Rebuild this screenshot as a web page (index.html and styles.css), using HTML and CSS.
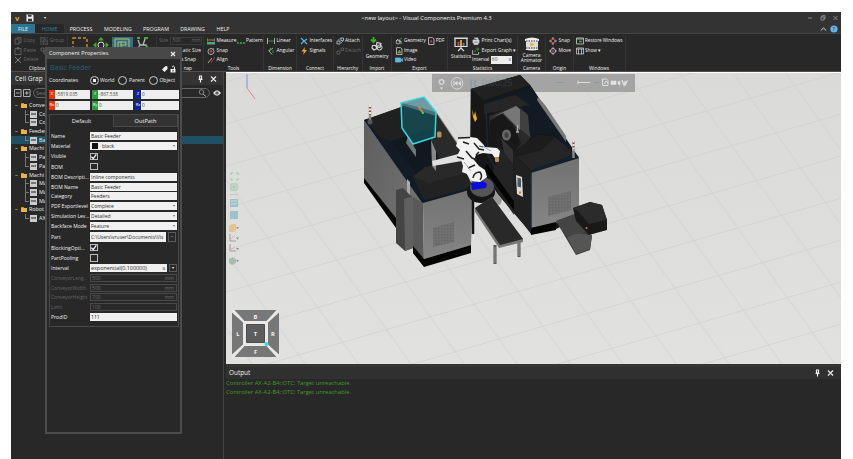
FILE: index.html
```html
<!DOCTYPE html>
<html lang="en">
<head>
<meta charset="utf-8">
<title>Visual Components Premium 4.3</title>
<link rel="stylesheet" href="styles.css">
</head>
<body>
<div class="app">
  <header class="titlebar">
    <div class="quick"><b>v</b>
      <svg width="8" height="8" viewBox="0 0 8 8"><path d="M.5.5h6l1 1v6h-7z" fill="#eee"/><path d="M2 .8h3.500v2H2zM2 4.800h4v2.400H2z" fill="#333"/></svg>
      <i>▾</i></div>
    <div class="title">&lt;new layout&gt; - Visual Components Premium 4.3</div>
    <div class="winbtns">
      <svg width="30" height="8" viewBox="0 0 30 8" fill="none" stroke="#aaa" stroke-width=".7"><path d="M0 4h4M13 3h3v3h-3zM14 3V1.700h3v3h-1M25.500 2l4 4m0-4l-4 4"/></svg>
    </div>
  </header>
  <nav class="tabs">
    <span class="file">FILE</span><span class="home">HOME</span><span class="t3">PROCESS</span><span class="t4">MODELING</span><span class="t5">PROGRAM</span><span class="t6">DRAWING</span><span class="t7">HELP</span>
    <div class="help"><svg width="20" height="8" viewBox="0 0 20 8"><path d="M.8 5.500L3.500 3l2.700 2.500" fill="none" stroke="#ddd"/><circle cx="14" cy="4" r="3.600" fill="#63b9e8"/></svg><em>?</em></div>
  </nav>
  <section class="ribbon">
    <div class="group g-clip dim">
      <div class="cols">
        <div class="col"><p><svg class="ic" viewBox="0 0 8 8"><path d="M1 2h4v5H1zM3 2V.7h4v5H5"/></svg>Copy</p><p><svg class="ic" viewBox="0 0 8 8"><path d="M1 1.500h6V7.500H1zM3 .6h2v1.500H3z"/></svg>Paste</p><p><svg class="ic x" viewBox="0 0 8 8"><path d="M1 1l6 6M7 1L1 7"/></svg>Delete</p></div>
        <div class="col"><p><svg class="ic" viewBox="0 0 8 8"><path d="M1 1h4v4H1zM3 3h4v4H3zM0 0h8v8H0z" stroke-dasharray="1.500 .7"/></svg>Group</p><p><svg class="ic" viewBox="0 0 8 8"><path d="M1 1h3v3H1zM4 4h3v3H4z"/></svg></p></div>
      </div><h6>Clipboa</h6>
    </div>
    <div class="group g-manip">
      <div class="big"><svg width="16" height="16" viewBox="0 0 16 16"><path d="M1 1h14v14H1z" fill="none" stroke="#c78a1f" stroke-width="1.500" stroke-dasharray="3 2"/></svg></div>
      <div class="big"><svg width="16" height="16" viewBox="0 0 16 16"><circle cx="8" cy="8" r="3" fill="none" stroke="#ddd"/><path d="M8 0l3 3.500H5zM0 8l3.500-3v6zM16 8l-3.500-3v6zM8 16l3-3.500H5z" fill="#3dae2b"/></svg></div>
      <div class="big on"><svg width="16" height="16" viewBox="0 0 16 16"><path d="M1 2h14v13H1zM4 5h8M4 5v8m3-8v7m0-4h5V5" fill="none" stroke="#c9bd51"/></svg></div>
      <div class="big"><svg width="16" height="16" viewBox="0 0 16 16"><path d="M3 3l2 5-2 3M5 8h6l2 4M8 8l2-6" fill="none" stroke="#bbb" stroke-width="1.300"/><path d="M2 1h3M9 1h4M1 12h4M11 9l4 4" stroke="#3dae2b" stroke-width="2"/></svg></div>
    </div>
    <div class="group g-snap"><p class="dimt">Size <u>500<s>mm</s></u></p><p class="r">atic Size</p><p class="r2">s Snap</p><h6>nap</h6></div>
    <div class="group g-tools"><div class="cols">
      <div class="col"><p><svg class="ic" viewBox="0 0 8 8"><path d="M0 1v6h8V1M0 3h8" stroke="#c6a33a"/><path d="M0 6h8" stroke="#4a9" stroke-width="2"/></svg>Measure</p><p><svg class="ic" viewBox="0 0 8 8"><circle cx="4" cy="4.500" r="3"/><path d="M4 4l3-3" stroke="#3dae2b"/><circle cx="4" cy="4.500" r="1.300" fill="#d33" stroke="none"/></svg>Snap</p><p><svg class="ic" viewBox="0 0 8 8"><path d="M1 7l4-5"/><path d="M4 7l4-6" stroke="#d33"/></svg>Align</p></div>
      <div class="col c-pat"><p><svg class="ic" viewBox="0 0 8 8"><path d="M0 6h8" stroke="#3dae2b" stroke-width="1.500" stroke-dasharray="2 1"/></svg>Pattern</p></div></div><h6>Tools</h6></div>
    <div class="group g-dim"><p><svg class="ic" viewBox="0 0 8 8"><path d="M.5 1v6M7.500 1v6"/><path d="M1 4h6" stroke="#3dae2b"/></svg>Linear</p><p><svg class="ic" viewBox="0 0 8 8"><path d="M6 1L2 4l3 3.500"/><path d="M6 3v3M1 4l3-3" stroke="#3dae2b"/></svg>Angular</p><h6>Dimension</h6></div>
    <div class="group g-con"><p><svg class="ic" viewBox="0 0 8 8"><path d="M1 1l3 3 3-2M4 4L1 7m3-3l3 3" stroke="#5fb7e5" stroke-width="1.200"/></svg>Interfaces</p><p><svg class="ic" viewBox="0 0 8 8"><path d="M5 0L1.500 4.500H4L3 8l4-5H4.500z" fill="#f0a81c" stroke="none"/></svg>Signals</p><h6>Connect</h6></div>
    <div class="group g-hier"><p><svg class="ic" viewBox="0 0 8 8"><path d="M1 4h3v3H1zM5 1h2.500v2.500H5z"/><path d="M2 3l3-2M5 6l2-2" stroke="#5fb7e5"/></svg>Attach</p><p class="dimt"><svg class="ic" viewBox="0 0 8 8"><path d="M1 4h3v3H1zM5 1h2.500v2.500H5z" stroke="#666"/></svg>Detach</p><h6>Hierarchy</h6></div>
    <div class="group g-imp"><div class="bigi"><svg width="14" height="15" viewBox="0 0 14 15"><path d="M3.500 0v3.500M1 2.500l2.500 2.500L6 2.500" fill="none" stroke="#3dae2b" stroke-width="1.800"/><path d="M7 5.500l4 1-1 4-4-1zM2.500 8.500l3 0 1.500 3-3 1.500-2-2z" fill="none" stroke="#ddd" stroke-width="1.100"/><circle cx="9.500" cy="10.500" r="2.600" fill="none" stroke="#ddd"/></svg>Geometry</div><h6>Import</h6></div>
    <div class="group g-exp"><div class="cols"><div class="col"><p><svg class="ic" viewBox="0 0 8 8"><circle cx="3" cy="5" r="2"/><path d="M3 4h3v3M1 4l2-2"/><path d="M4 3l3-2" stroke="#3dae2b"/></svg>Geometry</p><p><svg class="ic" viewBox="0 0 8 8"><path d="M1.500 .6h4L7 2v5.500H1.500z"/><path d="M2.500 6l2-3 1.500 3z" fill="#3dae2b" stroke="#c8a020" stroke-width=".5"/></svg>Image</p><p><svg class="ic" viewBox="0 0 8 8"><path d="M.5 2h5v4h-5zM5.500 4l2-1.500v3z" fill="#5fb7e5" stroke="#5fb7e5"/></svg>Video</p></div><div class="col"><p><svg class="ic" viewBox="0 0 8 8"><path d="M1.500 .6h4L7 2v5.500H1.500z"/><path d="M3 6l1-3 1 3" stroke="#d33"/></svg>PDF</p></div></div><h6>Export</h6></div>
    <div class="group g-stat"><div class="cols"><div class="bigi"><svg width="14" height="15" viewBox="0 0 14 15"><path d="M1 1.500h12v8H1zM0 1h14M7 9v3m-3 2l3-3 3 3" fill="none" stroke="#ddd" stroke-width="1.200"/><path d="M4.500 9V5" stroke="#d44" stroke-width="1.800"/><path d="M7 9V3" stroke="#f0a81c" stroke-width="1.800"/><path d="M9.500 9V6" stroke="#48c" stroke-width="1.800"/></svg>Statistics</div>
      <div class="col"><p><svg class="ic" viewBox="0 0 8 8"><path d="M1 3h6v3H1zM2 1h4v2M2 6h4v1.500H2z" fill="#ddd"/><path d="M2 5h4" stroke="#48a"/></svg>Print Chart(s)</p><p><svg class="ic" viewBox="0 0 8 8"><path d="M.6 3v4.400h6V5"/><path d="M3 5c0-2 1-3 3-3M5 .5L7 2 5 3.500" stroke="#3dae2b"/></svg>Export Graph ▾</p><p>Interval <b class="num">60<i>s</i></b></p></div></div><h6>Statistics</h6></div>
    <div class="group g-cam"><div class="bigi"><svg width="16" height="15" viewBox="0 0 16 15"><path d="M2 2h12v11H2z" fill="#ddd"/><path d="M1 2q7-3 14 0v2q-7 2-14 0zM1 12q7 3 14 0" fill="#eee"/><path d="M2 4h12M2 11h12" stroke="#333" stroke-dasharray="1.500 1"/><path d="M6.500 5.500v4l4-2z" fill="#f0a81c"/></svg>Camera<br>Animator</div><h6>Camera</h6></div>
    <div class="group g-org"><p><svg class="ic" viewBox="0 0 8 8"><circle cx="4" cy="4" r="2.500" stroke="#d44"/><path d="M4 0v3M4 5v3M0 4h3M5 4h3"/></svg>Snap</p><p><svg class="ic" viewBox="0 0 8 8"><circle cx="4" cy="4" r="2.500"/><path d="M4 0v2M4 6v2M0 4h2M6 4h2"/><circle cx="4" cy="4" r="1" stroke="#d44"/></svg>Move</p><h6>Origin</h6></div>
    <div class="group g-win"><p><svg class="ic" viewBox="0 0 8 8"><path d="M.5 1h7v6h-7zM.5 2h7"/><path d="M3 4.500h3" stroke="#3dae2b" stroke-width="1.500"/></svg>Restore Windows</p><p><svg class="ic" viewBox="0 0 8 8"><path d="M.5 1h7v6h-7zM.5 2h7M2.500 2v5M5.500 2v5"/></svg>Show ▾</p><h6>Windows</h6></div>
  </section>

  <main class="main">
    <aside class="side">
      <div class="head">Cell Grap <span class="pins"><svg width="20" height="8" viewBox="0 0 20 8"><path d="M2 1h3M2.500 1v3h2V1M1.500 4.500h4M3.500 4v3.500M14 1.500l5 5m0-5l-5 5" fill="none" stroke="#eee" stroke-width="1.200"/></svg></span></div>
      <div class="find"><svg width="17" height="8" viewBox="0 0 17 8"><path d="M.5 .5h6.500v7H.5zM2 4h3.500M9.500 .5H16v7H9.500zM11 4h3.500M12.700 2.200v3.600" fill="none" stroke="#ccc" stroke-width=".8"/></svg><span class="search">Sea<svg width="9" height="8" viewBox="0 0 9 8"><path d="M5 5l3 2.500" stroke="#aaa"/><circle cx="3.500" cy="3" r="2.300" fill="none" stroke="#aaa" stroke-width=".7"/></svg></span><svg width="8" height="6" viewBox="0 0 8 6"><path d="M0 3q4-5.500 8 0q-4 5.500-8 0z" fill="#ddd"/><circle cx="4" cy="3" r="1.600" fill="#333"/><circle cx="4" cy="3" r=".6" fill="#fff"/></svg></div>
      <ul class="tree">
        <li class="f">Conve</li><li class="c">Co</li><li class="c e">Co</li>
        <li class="f">Feeder</li><li class="c e sel">Ba</li>
        <li class="f">Machi</li><li class="c">Pa</li><li class="c e">Pa</li>
        <li class="f">Machi</li><li class="c">Ma</li><li class="c">Ma</li><li class="c e">Ma</li>
        <li class="f">Robot</li><li class="c e">AX</li>
      </ul>
    </aside>
    <div class="right">
      <div class="view">
        <svg class="scene" viewBox="226 73 615 291" width="615" height="291">
          <defs>
            <pattern id="grid" width="10" height="10" patternUnits="userSpaceOnUse" patternTransform="matrix(4.390 -1.270 2.490 3.480 647.600 65)"><path d="M5 0v10M0 5h10" stroke="#cfd0d5" stroke-width=".17"/></pattern>
            <pattern id="mesh" width="1.500" height="1.500" patternUnits="userSpaceOnUse"><path d="M0 0h1.500M0 0v1.500" stroke="#626262" stroke-width=".8"/></pattern>
            <linearGradient id="bg" x2="0" y2="1"><stop stop-color="#dadad9"/><stop offset="1" stop-color="#e1e1e0"/></linearGradient>
            <linearGradient id="lf" x2="1" y2="1"><stop stop-color="#5e5e5e"/><stop offset="1" stop-color="#777"/></linearGradient>
            <linearGradient id="ff" x2="0" y2="1"><stop stop-color="#727272"/><stop offset="1" stop-color="#858585"/></linearGradient>
          </defs>
          <path d="M226 73h615v291H226z" fill="url(#bg)"/><path d="M226 73h615v291H226z" fill="url(#grid)"/>
          <path d="M247 74v14" stroke="#8888ec"/><path d="M247 88l8 11" stroke="#e36d6d" stroke-width=".8"/>
          <rect x="432" y="74" width="203" height="18" fill="#8f8f8f" opacity=".72"/>
          <!-- right machine -->
          <path d="M470.700 89L520 75l10 10 49 73v60l-23 11-24 5-62-72z" fill="#171717"/>
          <path d="M471 89l49-14 10 10-46 15z" fill="#222"/>
          <path d="M483 102l32-9 15-8 48 72-7 2-14-23-20-2-16 8-3-35-10-7z" fill="#121a24"/>
          <path d="M538 97l7 8 21 31v6l-29-42z" fill="#777"/>
          <path d="M484 104l31-9 15 10-46 9z" fill="#262626"/>
          <path d="M489 116l27-11 6 5 9 27-10 12-11 12-20-22z" fill="#2a2a2a"/>
          <path d="M490 118l26-12 5 4-1 20-17-17-13 5z" fill="#777"/>
          <path d="M520 108l8 7 2 22-10-8z" fill="#404040"/>
          <path d="M490 121l12-7 11 11 8 18-10 13-21-15z" fill="#181818"/>
          <ellipse cx="506.500" cy="135" rx="4.500" ry="5.500" fill="#676767"/><ellipse cx="506.500" cy="135" rx="2" ry="3" fill="#3f3f3f"/>
          <path d="M517.500 125v7M516 132h3" stroke="#aaa" stroke-width="1.500"/>
          <path d="M486 107l2 48 31 55" fill="none" stroke="#17293c" stroke-width="1.500"/>
          <path d="M472 109l2 7 1-5 2 8-2 3-2-5z" fill="#f0b018"/>
          <path d="M500 150l13 4 1 61-24-35z" fill="#242424"/>
          <path d="M501 138l12 12v14l-9-12z" fill="#323232"/>
          <path d="M487 164l-3 5 47 65 1-8z" fill="#050505"/>
          <path d="M513 152l18 20v61l-17-20z" fill="#202020"/>
          <path d="M513 152l25-17 17 2 20 17-43 18z" fill="#252525"/><path d="M513 152l25-17 17 2-13 13-27 7z" fill="#1c1c1c"/>
          <path d="M531 170l44-16 4 3-48 16z" fill="#14202d"/>
          <path d="M531 173l48-15v60l-48 10z" fill="url(#ff)"/><path d="M531 173v55" stroke="#18283a" stroke-width="1.500"/>
          <path d="M531 228l25-6v8l-25 5z" fill="#050505"/>
          <path d="M548 197l23-6v19l-23 6z" fill="#777"/><path d="M548 197l23-6v19l-23 6z" fill="url(#mesh)"/>
          <path d="M516 175l6 2 1 20-6-3z" fill="#ddd"/><path d="M517.500 177.500l3.500 1v9l-3.500-1z" fill="#4b5764"/><circle cx="520" cy="192.500" r="1.200" fill="#e67b25"/>
          <path d="M556 221l19-7 13 18 4 4-2 14-14 5z" fill="#3a3a3a"/><path d="M567 237l10-4 15 2-2 14-14 5z" fill="#555"/><path d="M556 221l19-7 13 18-22 4z" fill="#444"/>
          <path d="M573 208l17-6 12 3 5 15v10l-18 5-13-14z" fill="#191919"/><path d="M573 208l17-6 12 3 5 15-18 4-11-13z" fill="#2b2b2b"/><circle cx="586.500" cy="228" r="1" fill="#f07820"/>
          <path d="M573.500 141v17" stroke="#888" stroke-width="2.500"/><path d="M573.500 141v10" stroke="#eee" stroke-width="2"/><path d="M573.500 142.500v8" stroke="#a33" stroke-width="2" stroke-dasharray="1.500 2"/>
          <!-- left machine -->
          <path d="M364 120l40-14 32 10 37 73-50 14z" fill="#1b1d20"/>
          <path d="M364 120l59 83v56l-28-37-31-42z" fill="url(#lf)"/>
          <path d="M364 178l32 40v10l-32-45z" fill="#050505"/>
          <path d="M364 120l13-4 47 63 49 7v4l-50 14z" fill="#121c27"/>
          <path d="M366 120l38-14 26 10 2 14-35 12-15-3z" fill="#202020"/>
          <path d="M391 141l39-13 14 34-26 14z" fill="#101820"/>
          <path d="M413 177l12-10 36-6 12 26-49 13z" fill="#222"/><path d="M413 177l12-10 36-6 5 12-37 10z" fill="#292929"/>
          <path d="M408 136l8 14v7l-10-14z" fill="#6f7475"/>
          <path d="M413 197l10 6 1 63-11-13z" fill="#595959"/>
          <path d="M423 203l50-14-2 56-47 14z" fill="url(#ff)"/>
          <path d="M413 246l11 13 47-14v8l-47 14-11-14z" fill="#050505"/>
          <path d="M407 179l3 3v14l-3-3z" fill="#aaa"/>
          <path d="M396 190l7-2 10 10v50l-8 3-9-8z" fill="#444"/><path d="M404 199l9-3v52l-8 3z" fill="#606060"/>
          <path d="M433 228l21-6v20l-21 5z" fill="#777"/><path d="M433 228l21-6v20l-21 5z" fill="url(#mesh)"/>
          <path d="M370 105v18" stroke="#888" stroke-width="2.500"/><path d="M370 105v11" stroke="#eee" stroke-width="2"/><path d="M370 107v9" stroke="#a33" stroke-width="2" stroke-dasharray="1.500 2"/><circle cx="370" cy="122" r="2.500" fill="#555"/>
          <!-- feed conveyor -->
          <path d="M431 139l5-1v33l-4-5z" fill="#888"/><path d="M436 112l27 40-22 11-10-23z" fill="#2a2a2a"/><path d="M436 112l27 40" stroke="#888"/>
          <path d="M432 161l30-8v8l-29 5z" fill="#e0e0e0"/>
          <rect x="437" y="131.500" width="4.500" height="6" rx="1.500" fill="#b98c57"/>
          <path d="M401 103l23-6 12 15-1 25-22 7-11-16z" fill="#16505b" fill-opacity=".75" stroke="#35d8dd" stroke-width="1.500"/><path d="M402 103l22-5 11 14-17-5z" fill="#8bb7bd" opacity=".6"/><path d="M418 106l5 7" stroke="#b88a3c" stroke-width="2"/><circle cx="423" cy="113" r="1" fill="#3e3"/>
          <!-- outlet conveyor -->
          <path d="M473 165v69" stroke="#151515" stroke-width="2.500"/>
          <path d="M491 184l11 16-2 5-11-4z" fill="#999"/><ellipse cx="481" cy="192" rx="14" ry="11" fill="#151515"/><ellipse cx="482" cy="187" rx="12" ry="10" fill="#555"/>
          <path d="M495 245v19M519 240v17" stroke="#555" stroke-width="3"/><path d="M495 247v16M519 241v15" stroke="#999"/>
          <path d="M475 208l17-11 31 42v3l-24 6-24-36z" fill="#777"/><path d="M475 208l17-11 31 42-23 6z" fill="#292929"/>
          <!-- robot -->
          <path d="M471 183l12-2 4 3-1 4-14 2z" fill="#0c0cda"/>
          <path d="M458 140l12-3 7 1 6 6 2 3 12 1 3 3-1 6-4 1-3-4-9-1-7 2-2 5 5 6 6 4 2 7-7 5-8-1-5-7-5-2 1-6-2-8-4-2 3-6-4-4z" fill="#f2f2f2"/>
          <path d="M458 138l12-.500M463 142l6 2M466 151l6 7 5 2M457 157l7 2M468 168l7-3M473 178q1-6 7-6 3 4 0 8M474 143l5 6 5 1M476 155l3-3" fill="none" stroke="#222" stroke-width="1.500"/>
          <path d="M464 162l7 9M482 146l9 5" fill="none" stroke="#aaa"/><path d="M479 146l4 1" stroke="#3a4f7c" stroke-width="1.200"/><rect x="495" y="157" width="4" height="5" rx="1" fill="#bb8b55"/>
          <!-- playback bar -->
          <g fill="none" stroke="#e3e3e3"><circle cx="441.500" cy="82" r="2.300" stroke-width="1.600" stroke-dasharray="1.400 .5"/><circle cx="457" cy="83.300" r="5.800" stroke-width=".8"/><path d="M454 80.800v5"/><path d="M578 82.500h12M578 80.500v4M602.500 79h4l1.500 1.500v5h-5.500zM604 84l2-3 2 2" stroke-width=".9"/><path d="M611 81h5v3.500h-5zM618 82l2-1v4l-2-1z" fill="#e3e3e3" stroke-width=".6"/><path d="M622 80l2 5 1.500-4M625 85.500l2.500-5" stroke-width="1.200"/></g>
          <path d="M440 87.500h3l-1.500 2zM457.500 80.800v5l-3-2.500zM461 80.800v5l-3-2.500z" fill="#e3e3e3"/><path d="M471 79.500v8M475 79.500v8" stroke="#829ca9" stroke-width="1.500"/><path d="M556 82.500h8M594 82.500h5" stroke="#7f98a4" stroke-width=".8"/>
          <text x="482" y="86" class="clock">0:00:25</text><text x="533" y="85" class="speed">3.5</text>
          <path d="M470.700 89L513 77l7-2 6 6-40 17z" fill="#222" opacity=".8"/>
          <!-- view tools -->
          <g opacity=".6"><g fill="none" stroke="#76b879"><path d="M231 175v-2h2M236 173h2v2M231 178v2h2M236 180h2v-2M231 184h6v6h-6zM233 186h2v2h-2z"/></g><path d="M230 194.500h8" stroke="#bbb"/><path d="M230 199h8v8h-8zM230 211h8v8h-8z" fill="#78aebb"/><path d="M231 201h6M231 204h6" stroke="#c9dddd"/><path d="M229 226l3-2h4v6l-2 2h-5z" fill="#e7b45f"/><path d="M230 234v7h6M230 244v7h6" fill="none" stroke="#777"/><path d="M230 240l5-5M230 250l5-3" stroke="#d99"/><path d="M229 259l4-2 3 2v4l-4 2-3-2z" fill="#85aa90"/><path d="M236 227h3l-1.500 2zM236 237.500h3l-1.500 2zM236 248h3l-1.500 2zM236 260h3l-1.500 2z" fill="#555"/></g>
          <!-- view cube -->
          <path d="M232 310h47v47h-47z" fill="#e9e9e9"/><path d="M234.500 310h42l-10 11h-22zM234.500 357h42l-10-11h-22zM232 312.500v42l11-10v-22zM279 312.500v42l-11-10v-22z" fill="#777"/><path d="M246.500 324.500h18v18h-18z" fill="#5d5d5d" stroke="#4d4d4d"/><circle cx="266.500" cy="344" r="2" fill="#35dce3"/>
          <g class="cube"><text x="255.500" y="318.500">B</text><text x="255.500" y="335.500">T</text><text x="255.500" y="353.500">F</text><text x="238" y="335.500">L</text><text x="273" y="335.500">R</text></g>
        </svg>
      </div>
      <div class="output">
        <div class="ohead">Output <svg width="20" height="8" viewBox="0 0 20 8"><path d="M2 1h3M2.500 1v3h2V1M1.500 4.500h4M3.500 4v3.500M14 1.500l5 5m0-5l-5 5" fill="none" stroke="#eee" stroke-width="1.200"/></svg></div>
        <p>Controller AX-A2-B4::OTC: Target unreachable.</p><p>Controller AX-A2-B4::OTC: Target unreachable.</p>
      </div>
    </div>
  </main>
</div>

<section class="dialog">
  <div class="dhead">Component Properties <svg width="6" height="6" viewBox="0 0 6 6"><path d="M1 1l4 4m0-4L1 5" stroke="#eee" stroke-width="1.200"/></svg></div>
  <div class="dname">Basic Feeder <svg width="15" height="8" viewBox="0 0 15 8"><path d="M0 4.500L3.500 1l2 .5V4L2.500 7z" fill="#eee"/><path d="M8.500 4h5v3.500h-5z" fill="#eee"/><path d="M12.500 4V2q-1-1.800-2.500 0" fill="none" stroke="#eee"/><path d="M11 5v1.500" stroke="#333"/></svg></div>
  <div class="radios"><span>Coordinates</span><label class="chk">World</label><label>Parent</label><label>Object</label></div>
  <div class="coords">
    <div><b class="cx">X</b>-5819.035</div><div><b class="cy">Y</b>-867.538</div><div><b class="cz">Z</b>0</div>
    <div><b class="cx">Rx</b>0</div><div><b class="cy">Ry</b>0</div><div><b class="cz">Rz</b>0</div>
  </div>
  <div class="props">
    <div class="ptabs"><span>Default</span><span>OutPath</span></div>
    <div class="rows">
      <label>Name</label><div class="in">Basic Feeder</div>
      <label>Material</label><div class="in dd"><i class="sw"></i>black</div>
      <label>Visible</label><div class="cb"><svg viewBox="0 0 8 8"><path d="M1.500 4l2 2 3.200-4.500" fill="none" stroke="#fff" stroke-width="1.300"/></svg></div>
      <label>BOM</label><div class="cb"></div>
      <label>BOM Descripti...</label><div class="in">Inline components</div>
      <label>BOM Name</label><div class="in">Basic Feeder</div>
      <label>Category</label><div class="in">Feeders</div>
      <label>PDF Exportlevel</label><div class="in dd">Complete</div>
      <label>Simulation Lev...</label><div class="in dd">Detailed</div>
      <label>Backface Mode</label><div class="in dd">Feature</div>
      <label>Part</label><div class="pair"><div class="in path">C:\Users\vruser\Documents\Vis</div><b class="dots">...</b></div>
      <label>BlockingOpti...</label><div class="cb"><svg viewBox="0 0 8 8"><path d="M1.500 4l2 2 3.200-4.500" fill="none" stroke="#fff" stroke-width="1.300"/></svg></div>
      <label>PartPooling</label><div class="cb"></div>
      <label>Interval</label><div class="pair"><div class="in iv">exponential(0.100000)<s>s</s></div><b>▾</b></div>
      <label class="off">ConveyorLeng...</label><div class="in offin">500<s>mm</s></div>
      <label class="off">ConveyorWidth</label><div class="in offin">500<s>mm</s></div>
      <label class="off">ConveyorHeight</label><div class="in offin">700<s>mm</s></div>
      <label class="off">Limit</label><div class="in offin">100</div>
      <label>ProdID</label><div class="in">111</div>
    </div>
  </div>
</section>
</body>
</html>
```
FILE: styles.css
```css
* { box-sizing: border-box; }
body { margin: 0; width: 853px; height: 459px; overflow: hidden; background: #fff; font-family: "Open Sans", "Noto Sans", sans-serif; font-size: 5.2px; line-height: 1.2; color: #f2f2f2; padding: 12px 12px 0 11px; }
p, h6, ul { margin: 0; padding: 0; }
s, u { text-decoration: none; }
i, em { font-style: normal; }
svg { flex: none; display: block; }
.app { width: 830px; height: 447px; background: #282828; display: flex; flex-direction: column; white-space: nowrap; }

.titlebar { height: 12px; flex: none; background: #333; display: flex; align-items: center; justify-content: space-between; padding: 0 3px 0 4px; }
.quick { display: flex; gap: 7px; align-items: center; width: 60px; }
.quick b { color: #e9a51b; font-size: 7.500px; line-height: 8px; }
.quick i { font-size: 4px; margin-left: 3px; }
.title { font-size: 5.850px; }
.winbtns { width: 60px; display: flex; justify-content: flex-end; }
.tabs { height: 10px; flex: none; background: #333; border-bottom: 1px solid #444; display: flex; font-size: 5.300px; line-height: 10px; text-align: center; }
.file { width: 24px; background: #2b7492; }
.home { width: 29px; background: #272727; color: #2f86a8; }
.t3 { width: 34px; } .t4 { width: 40px; } .t5 { width: 36px; } .t6 { width: 37px; } .t7 { width: 24px; }
.help { margin-left: auto; width: 21px; position: relative; padding-top: 1px; }
.help em { position: absolute; left: 12.500px; top: 0; color: #2869a0; font-weight: bold; }

.ribbon { height: 38px; flex: none; background: #282828; display: flex; padding-top: 1.500px; border-bottom: 1px solid #544d4d; font-size: 4.900px; }
.group { border-right: 1px solid #353535; height: 35.500px; padding: 1px 0 0 3px; display: flex; flex-direction: column; flex: none; }
.group p { height: 9.500px; display: flex; align-items: center; gap: 1.500px; }
.group h6 { margin-top: auto; font-size: 4.700px; font-weight: 400; text-align: center; line-height: 6px; margin-left: -3px; }
.ic { width: 8px; height: 8px; fill: none; stroke: #ccc; stroke-width: .8; }
.cols { display: flex; gap: 2px; }
.dimt, .dim p { color: #6a6a6a; } .dim .ic { stroke: #6a6a6a; } .dim .ic.x { stroke: #999; }
.g-clip { width: 57px; } .g-clip h6 { margin-left: 0; padding-left: 15px; text-align: left; }
.g-manip { width: 89px; flex-direction: row; padding-left: 2px; }
.big { width: 20.500px; height: 18px; display: flex; justify-content: center; padding-top: 0; }
.big + .big { margin-left: .5px; } .big.on { background: #2d718d; }
.g-snap { width: 47px; padding-left: 2px; }
.g-snap u { border: 1px solid #3b3b3b; width: 32px; padding: 0 1px; display: flex; justify-content: space-between; margin-left: 1px; }
.g-snap .r, .g-snap .r2 { justify-content: flex-end; padding-right: 2px; } .g-snap .r2 { padding-right: 7px; }
.group.g-snap h6 { text-align: right; padding-right: 11px; }
.g-tools { width: 60px; } .g-tools .cols { gap: 1px; } .c-pat p { gap: .5px; }
.g-dim { width: 33px; } .g-con { width: 37px; } .g-hier { width: 29px; padding-left: 2px; }
.g-hier p { gap: 1px; }
.g-imp { width: 29px; } .g-exp { width: 56px; font-size: 4.700px; padding-left: 3px; } .g-exp .cols { gap: 1px; } .g-exp p { gap: 1px; }
.g-stat { width: 70px; } .g-cam { width: 28px; } .g-org { width: 28px; } .g-win { width: 52px; padding-left: 2px; font-size: 4.650px; } .g-win p { gap: 1px; }
.bigi { display: flex; flex-direction: column; align-items: center; line-height: 5px; gap: 2px; text-align: center; margin-left: -1px; }
.g-cam .bigi, .g-imp .bigi { margin-left: -3px; } .g-cam .bigi { gap: 1px; }
.g-stat .cols { gap: 1px; } .g-stat .bigi { margin-left: 0; }
.num { background: #eee; color: #555; width: 21px; height: 8px; font-weight: 400; padding: 1px; display: flex; justify-content: space-between; margin-left: 0; }

.main { flex: 1; display: flex; min-height: 0; }
.side { width: 213px; border-right: 1px solid #444; flex: none; }
.head { height: 13px; background: #333; font-size: 6.500px; line-height: 13px; padding: 0 6px 0 4px; display: flex; justify-content: space-between; align-items: center; }
.find { height: 16px; padding: 0 2px 0 3px; display: flex; gap: 2px; align-items: center; }
.search { flex: 1; height: 10px; border: 1px solid #666; border-radius: 5px; display: flex; justify-content: space-between; align-items: center; padding: 0 2px; color: #777; font-size: 5.300px; margin-right: 1px; }
.tree { list-style: none; font-size: 5.400px; }
.tree li { height: 8.700px; line-height: 8.700px; display: flex; align-items: center; }
.tree .f::before { content: "–"; width: 6px; margin: 0 8px 0 4px; }
.tree .f { background: linear-gradient(#e8b44a, #e8b44a) 10px 3px / 6px 4px no-repeat, linear-gradient(#c78a28, #c78a28) 10px 2px / 3px 2px no-repeat; }
.tree .c { padding-left: 28px; background: linear-gradient(#777, #777) 14px 0 / 1px 100% no-repeat, linear-gradient(#777, #777) 14px 4px / 4px 1px no-repeat, linear-gradient(#777, #777) 20px 3px / 5px 2px no-repeat, linear-gradient(#ccc, #ccc) 19px 1px / 7px 7px no-repeat; }
.tree .e { background-size: 1px 50%, 4px 1px, 5px 2px, 7px 7px; }
.tree .sel { background-color: #205064; }

.right { flex: 1; display: flex; flex-direction: column; padding-left: 2px; min-width: 0; }
.view { height: 292px; flex: none; border-top: 1px solid #fff; }
.clock { font-size: 9px; fill: #829ca9; }
.speed { font-size: 5px; fill: #8fa9b8; }
.cube text { font-size: 5.800px; font-weight: bold; fill: #f4f4f4; text-anchor: middle; }
.output { flex: 1; border-top: 3px solid #353535; }
.ohead { height: 12px; background: #303030; display: flex; align-items: center; justify-content: space-between; padding: 0 7px 0 3px; font-size: 6.400px; }
.output p { color: #459a2b; font-size: 5.800px; height: 8.500px; line-height: 8.500px; padding-left: 0; }

.dialog { position: absolute; left: 45px; top: 47px; width: 137px; height: 387px; background: #282828; border: 2px solid #4c4c4c; border-top-width: 1px; padding: 0 1px 0 2px; white-space: nowrap; }
.dhead { height: 11px; margin: 0 -1px 0 -2px; background: #484848; display: flex; align-items: center; justify-content: space-between; padding: 0 4px 0 2px; font-size: 5.600px; }
.dname { height: 16px; display: flex; align-items: center; justify-content: space-between; padding: 3px 2px 0 1px; color: #22627a; font-size: 7px; }
.radios { height: 14px; display: flex; align-items: center; font-size: 5.150px; padding-bottom: 3px; }
.radios span { width: 43px; }
.radios label { display: flex; align-items: center; gap: 1.500px; margin-right: 4px; }
.radios label::before { content: ""; width: 7px; height: 7px; border: 1px solid #ccc; border-radius: 50%; }
.radios .chk::before { background: radial-gradient(#eee 0 1.600px, transparent 2px); }
.coords { display: grid; grid-template-columns: 41px 41px 44px; grid-template-rows: 8.500px 8.500px; gap: 2.500px 2px; padding-top: 1px; height: 21.500px; font-size: 4.700px; line-height: 8px; color: #444; margin-bottom: 3px; }
.coords div { background: #eee; display: flex; align-items: center; gap: 1px; height: 8.500px; }
.coords b { width: 6px; align-self: stretch; display: flex; align-items: center; justify-content: center; font-weight: 400; font-size: 4.200px; color: #fff; }
.cx { background: #ee3508; } .cy { background: #2b9e3b; } .cz { background: #0a24a8; }
.props { border: 1px solid #484848; border-top: 0; width: 130px; height: 213.500px; }
.ptabs { height: 13px; display: flex; font-size: 5.700px; line-height: 13px; text-align: center; }
.ptabs span { flex: 1; } .ptabs span:first-child { border-top: 1px solid #484848; } .ptabs span + span { background: #333; border: 1px solid #484848; }
.rows { display: grid; grid-template-columns: 39px 87px; grid-template-rows: 10.400px 10.300px 10.300px 10.200px 10px 9.800px 9.900px 9.900px 9.900px 10px 11.300px 10.500px 10px 9.900px 9.900px 9.800px 9.900px 9.900px 10px; align-items: center; padding: 4px 0 0 1px; font-size: 5.050px; }
.rows label { line-height: 8px; } .rows .off { color: #646464; font-size: 4.900px; }
.in { height: 8px; background: #f0f0f0; color: #2c2c2c; line-height: 8px; padding: 0 2px 0 1px; display: flex; align-items: center; overflow: hidden; }
.in s { margin-left: auto; }
.dd::after { content: ""; margin-left: auto; border: 1.500px solid transparent; border-top: 2px solid #777; border-bottom: 0; }
.sw { width: 6px; height: 6px; background: #111; margin: 0 4px 0 1px; }
.cb { width: 7.500px; height: 7.500px; border: 1px solid #bbb; }
.cb svg { margin: -1px; }
.pair { display: flex; gap: 2px; } .pair .path { width: 76px; height: 10px; font-size: 4.950px; } .pair .iv { width: 77px; font-size: 5.400px; }
.pair b { width: 8px; border: 1px solid #5a5a5a; text-align: center; font-weight: 400; line-height: 6px; font-size: 4px; }
.offin { background: #292929; border: 1px solid #4a4a4a; color: #6c6c6c; line-height: 6px; }
```
